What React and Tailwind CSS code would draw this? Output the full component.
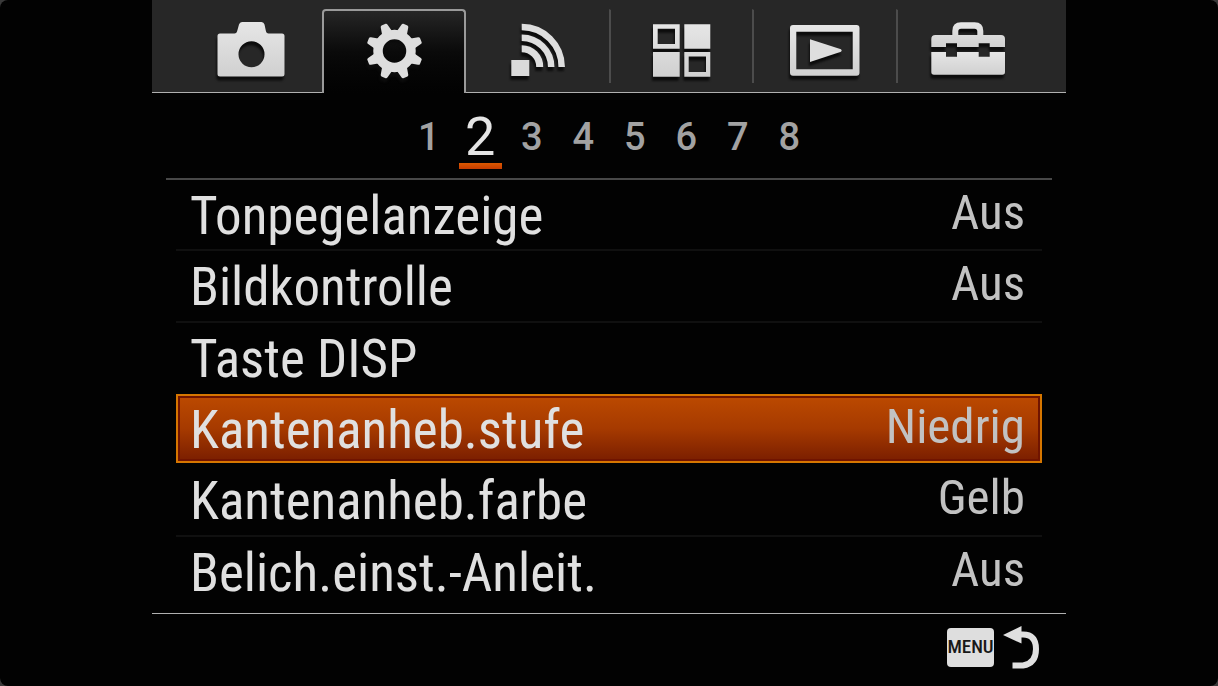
import React, { useState } from "react";

const TEETH = [22.5, 67.5, 112.5, 157.5, 202.5, 247.5, 292.5, 337.5];

function Icon({ children }) {
  return (
    <svg
      viewBox="0 0 100 73"
      className="block h-[73px] w-[100px] drop-shadow-[-1px_4px_1px_#0c0c0c]"
      aria-hidden="true"
    >
      {children}
    </svg>
  );
}

function CameraIcon() {
  return (
    <Icon>
      <path
        fillRule="evenodd"
        fill="url(#metal)"
        d="M19 23.500h14.500q2 0 2.500-2l2-7q.7-2.500 3-2.500h19.500q2.300 0 3 2.500l1.500 7q.5 2 2.500 2h13.500q2.500 0 2.500 2.500v38q0 2.500-2.500 2.500h-62q-2.500 0-2.500-2.500v-38q0-2.500 2.500-2.500zM50.500 31.300a13 13 0 1 0 0 26 13 13 0 1 0 0-26z"
      />
    </Icon>
  );
}

function GearIcon() {
  return (
    <Icon>
      <circle cx="50.5" cy="40" r="16.5" fill="none" stroke="#dedede" strokeWidth="9.5" />
      {TEETH.map((a) => (
        <path
          key={a}
          d="M45 21.500L46.800 13q.4-1.500 1.500-1.500h4.400q1.100 0 1.500 1.500l1.800 8.500z"
          fill="#dedede"
          transform={`rotate(${a} 50.5 40)`}
        />
      ))}
    </Icon>
  );
}

function WirelessIcon() {
  return (
    <Icon>
      <rect x="24.300" y="50" width="18" height="16" fill="#dadada" />
      <g fill="none" stroke="#dedede">
        <path d="M34.700 17a40 40 0 0 1 40 40" strokeWidth="6.500" />
        <path d="M34.700 27.700a29.500 29.500 0 0 1 29.500 29.300" strokeWidth="6.500" />
        <path d="M34.700 38.700a18 18 0 0 1 18 18.300" strokeWidth="7" />
      </g>
    </Icon>
  );
}

function AppsIcon() {
  return (
    <Icon>
      <path
        fill="url(#metal)"
        fillRule="evenodd"
        d="M21 14.300h26.700v24.400H21zM25.700 18.700v15.300h17.300v-15.300zM52.300 14.300h26v24.400h-26zM21 42h26.700v24.700H21zM52.300 42h26v24.700h-26zM56.700 46.500v15.500h17.300v-15.500z"
      />
    </Icon>
  );
}

function PlaybackIcon() {
  return (
    <Icon>
      <path
        fill="url(#metal)"
        fillRule="evenodd"
        d="M18 15h63.500q3 0 3 3v44.700q0 3-3 3H18q-3 0-3-3V18q0-3 3-3zM21.300 21.700v37.600h56.400V21.700z"
      />
      <path d="M35 29.300l31 10q1.500 1.200 0 2.400L35 52z" fill="#dedede" />
    </Icon>
  );
}

function ToolboxIcon() {
  return (
    <Icon>
      <path
        fill="url(#metal)"
        d="M34.300 25v-4q0-8.700 8.700-8.700h13.600q8.700 0 8.700 8.700v4H83q4 0 4 4v8H71.700v-3.700h-11V37H39v-3.700H28V37H13.300v-8q0-4 4-4zM40.300 25h19v-3.500q0-2.800-2.800-2.800H43.100q-2.800 0-2.800 2.800z"
        fillRule="evenodd"
      />
      <path
        fill="url(#metal)"
        d="M13.300 42H28v4.700h11V42h21.700v4.700h11V42H87v20q0 2.700-2.700 2.700H16q-2.700 0-2.700-2.700z"
      />
    </Icon>
  );
}

const TABS = [
  { name: "Kamera", Drawing: CameraIcon, divided: false },
  { name: "Benutzer", Drawing: GearIcon, divided: false },
  { name: "Drahtlos", Drawing: WirelessIcon, divided: false },
  { name: "Applikation", Drawing: AppsIcon, divided: true },
  { name: "Wiedergabe", Drawing: PlaybackIcon, divided: true },
  { name: "Einstellung", Drawing: ToolboxIcon, divided: true },
];

const PAGES = [1, 2, 3, 4, 5, 6, 7, 8];

const ITEMS = [
  { label: "Tonpegelanzeige", value: "Aus" },
  { label: "Bildkontrolle", value: "Aus" },
  { label: "Taste DISP", value: "" },
  { label: "Kantenanheb.stufe", value: "Niedrig" },
  { label: "Kantenanheb.farbe", value: "Gelb" },
  { label: "Belich.einst.-Anleit.", value: "Aus" },
];

function tabStyle(active, divided) {
  if (active)
    return "relative -mb-px rounded-t-[4px] border-x-2 border-t-2 border-[#9a9a9a] bg-linear-to-b from-[#262626] via-[#0a0a0a] to-[#020202] pb-[9px]";
  if (divided) return "mb-[9px] border-t border-l-2 border-t-transparent border-l-[#4c4c4c]";
  return "mb-[9px] border-t border-transparent";
}

export default function App() {
  const [tab, setTab] = useState(1);
  const [page, setPage] = useState(2);
  const [selected, setSelected] = useState(3);

  return (
    <div className="bg-[#3a3a3a]">
      <svg className="absolute size-0" aria-hidden="true">
        <defs>
          <linearGradient id="metal" x1="0" y1="0" x2="0" y2="1">
            <stop offset="0" stopColor="#e6e6e6" />
            <stop offset="1" stopColor="#d0d0d0" />
          </linearGradient>
        </defs>
      </svg>
      <main className="flex min-h-screen flex-col rounded-lg bg-[#020202] px-38 font-['Roboto_Condensed','Liberation_Sans',sans-serif] text-[#e0e0e0]">
        <nav className="grid grid-cols-6 border-b border-[#b0b0b0] bg-[#272727] px-[27px] pt-[9px]">
          {TABS.map(({ name, Drawing, divided }, i) => (
            <button
              key={name}
              type="button"
              aria-label={name}
              onClick={() => setTab(i)}
              className={`flex justify-center ${tabStyle(i === tab, divided)}`}
            >
              <Drawing />
            </button>
          ))}
        </nav>

        <div className="mx-[14px] flex h-[87px] justify-center border-b-2 border-[#484848] font-[Roboto,sans-serif]">
          <div className="grid w-[412px] grid-cols-8">
            {PAGES.map((n) => (
              <button
                key={n}
                type="button"
                onClick={() => setPage(n)}
                className="flex h-[76px] flex-col items-center pt-[14px]"
              >
                <span
                  className={
                    n === page
                      ? "text-[54px] leading-[60px] text-[#e4e4e4]"
                      : "text-[38px] leading-[60px] font-medium text-[#a2a2a2]"
                  }
                >
                  {n}
                </span>
                {n === page && (
                  <span className="-mt-1 h-[6px] w-[43px] shrink-0 bg-linear-to-b from-[#dc5800] to-[#c43c00]" />
                )}
              </button>
            ))}
          </div>
        </div>

        <ul className="mx-6 grid flex-1 auto-rows-fr pb-[5px]">
          {ITEMS.map(({ label, value }, i) => (
            <li
              key={label}
              className={
                i === selected || i + 1 === selected || i === ITEMS.length - 1
                  ? "flex border-b-2 border-transparent"
                  : "flex border-b-2 border-[#101010]"
              }
            >
              <button
                type="button"
                onClick={() => setSelected(i)}
                className={`flex flex-1 items-start justify-between border-2 pt-1 pr-[15px] pl-3 text-left whitespace-nowrap ${
                  i === selected
                    ? "border-[#d67600] bg-linear-to-b from-[#bc4a00] via-[#a63a00] to-[#7a1e00] shadow-[inset_0_0_0_2px_#701400]"
                    : "border-transparent"
                }`}
              >
                <span className="text-[53px] leading-[60px]">{label}</span>
                <span className="text-[49px] leading-[54px] text-[#c2c2c2]">{value}</span>
              </button>
            </li>
          ))}
        </ul>

        <footer className="flex h-[73px] items-start justify-end border-t border-[#b0b0b0] pt-[11px] pr-[26px]">
          <button type="button" className="flex items-center gap-2" aria-label="MENU zurück">
            <span className="flex h-[39px] w-[47px] items-center justify-center rounded-[4px] bg-[#dedede] text-[19px] font-medium text-[#181818]">
              MENU
            </span>
            <svg viewBox="0 0 38 44" className="h-[44px] w-[38px]" aria-hidden="true">
              <path d="M1 10L19.500 1v17.500z" fill="#e0e0e0" />
              <path
                d="M17 9.500h4q13 0 13 14.500t-13 16.500h-10.500"
                fill="none"
                stroke="#e0e0e0"
                strokeWidth="6"
              />
            </svg>
          </button>
        </footer>
      </main>
    </div>
  );
}
